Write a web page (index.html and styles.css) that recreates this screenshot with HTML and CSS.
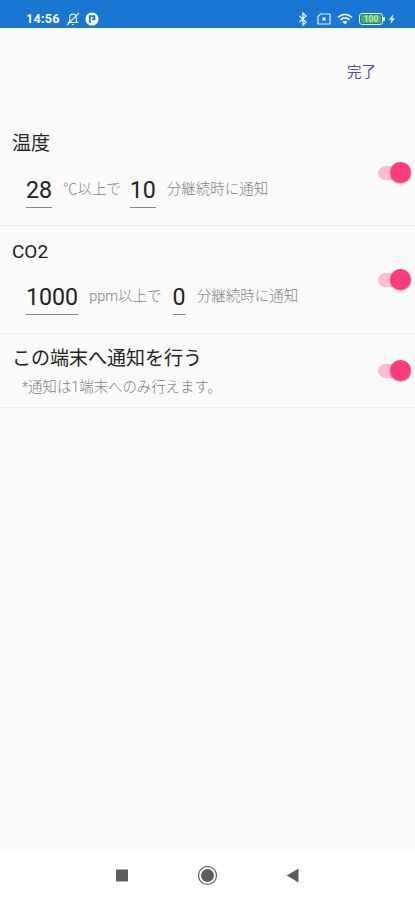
FILE: index.html
```html
<!DOCTYPE html>
<html lang="ja">
<head>
<meta charset="utf-8">
<meta name="viewport" content="width=device-width">
<title>通知設定</title>
<link rel="stylesheet" href="styles.css">
</head>
<body>
<header class="status">
  <span class="clock">14:56</span>
  <svg class="bell" width="14" height="14" viewBox="0 0 14 14" fill="none" stroke="currentColor" stroke-width="1.2"><path d="M2.5 10.5h9L10.3 9V5.5a3.3 3.3 0 0 0-6.6 0V9zM6 12.5h2M1 13L13 1"/></svg>
  <svg class="app" width="14" height="14" viewBox="0 0 14 14"><circle cx="7" cy="7" r="6.6" fill="#fff"/><path d="M4.800 11V4.200h4.600v3H7" fill="none" stroke="#1976d2" stroke-width="1.8"/></svg>
  <span class="spacer"></span>
  <svg class="bluetooth" width="10" height="14" viewBox="0 0 10 14" fill="none" stroke="currentColor" stroke-width="1.4"><path d="M1.500 4L8 10 5 13V1l3 3-6.500 6"/></svg>
  <svg class="sim" width="14" height="12" viewBox="0 0 14 12" fill="none" stroke="currentColor" stroke-width="1.2"><path d="M3.500 1H13v10H1V3.500z"/><path d="M5.500 4.500l3 3M8.500 4.500l-3 3" stroke-width="1.500"/></svg>
  <svg class="wifi" width="16" height="12" viewBox="0 0 16 12" fill="none" stroke="currentColor" stroke-width="1.7"><path d="M1 4.300q7-6 14 0M3.300 6.900q4.700-4 9.400 0"/><path d="M5.300 8.700q2.700-2 5.400 0L8 11.600z" fill="currentColor" stroke="none"/></svg>
  <span class="battery"><span class="level">100</span></span>
  <svg class="bolt" width="8" height="12" viewBox="0 0 8 12"><path d="M5.500 1L.8 6.800h2.700L2.300 11 7.200 5.200H4.500z" fill="currentColor"/></svg>
</header>
<div class="toolbar"><a class="done">完了</a></div>
<main>
  <section class="row">
    <div class="body">
      <h2>温度</h2>
      <div class="rule"><span class="value">28</span><span class="unit celsius">℃以上で</span><span class="value">10</span><span class="unit">分継続時に通知</span></div>
    </div>
    <span class="switch"></span>
  </section>
  <section class="row co2">
    <div class="body">
      <h2>CO2</h2>
      <div class="rule"><span class="value">1000</span><span class="unit">ppm以上で</span><span class="value">0</span><span class="unit">分継続時に通知</span></div>
    </div>
    <span class="switch"></span>
  </section>
  <section class="row short">
    <div class="body">
      <h2>この端末へ通知を行う</h2>
      <p class="note">*通知は1端末へのみ行えます。</p>
    </div>
    <span class="switch"></span>
  </section>
</main>
<nav>
  <svg width="20" height="20" viewBox="0 0 20 20"><rect x="4" y="3.500" width="12" height="12" rx=".5" fill="#5c5c5c"/></svg>
  <svg width="20" height="20" viewBox="0 0 20 20"><circle cx="9.500" cy="9.500" r="9" fill="none" stroke="#5c5c5c" stroke-width="1.200"/><circle cx="9.500" cy="9.500" r="6.500" fill="#5c5c5c"/></svg>
  <svg width="20" height="20" viewBox="0 0 20 20"><path d="M2.700 9.500L14.500 2.500v14z" fill="#5c5c5c"/></svg>
</nav>
</body>
</html>
```
FILE: styles.css
```css
* { box-sizing: border-box; }
body {
  margin: 0;
  height: 900px;
  display: flex;
  flex-direction: column;
  background: #fafafa;
  color: #222;
  font-family: Roboto, "Noto Sans CJK JP", sans-serif;
  overflow: hidden;
}
.status {
  height: 28px;
  padding: 9px 19px 0 26px;
  display: flex;
  align-items: center;
  background: #1976d2;
  color: #e3effb;
}
.clock { font-size: 12.5px; font-weight: 700; letter-spacing: .3px; line-height: 19px; color: #fff; }
.bell { margin-left: 6px; }
.app { margin-left: 5px; }
.spacer { flex: 1; }
.sim { margin-left: 9px; }
.wifi { margin-left: 6px; }
.battery {
  position: relative;
  width: 24px;
  height: 12px;
  margin: 0 2px 0 6px;
  padding: 1px;
  border: 1px solid #e3effb;
  border-radius: 3px;
}
.battery::after {
  content: "";
  position: absolute;
  right: -3px;
  top: 3px;
  width: 2px;
  height: 4px;
  background: #e3effb;
}
.level {
  display: block;
  height: 8px;
  border-radius: 1px;
  background: #4caf50;
  color: #c5ecb0;
  font-size: 8.5px;
  font-weight: 700;
  line-height: 8px;
  text-align: center;
}
.bolt { margin-left: 3px; }
.toolbar {
  height: 90px;
  padding: 35px 39px 0 0;
  display: flex;
  justify-content: flex-end;
  align-items: flex-start;
}
.done { font-size: 14.5px; line-height: 20px; color: #5648d4; }
main { flex: 1; }
.row {
  height: 108px;
  padding: 0 4px 0 12px;
  display: flex;
  align-items: center;
  justify-content: space-between;
  border-bottom: 1px solid #eee;
}
.body { align-self: flex-start; padding-top: 12px; }
h2 { margin: 0; font-size: 19px; font-weight: 400; line-height: 28px; }
.rule {
  display: flex;
  align-items: flex-start;
  padding: 17px 0 0 14px;
}
.value {
  height: 33px;
  border-bottom: 1px solid #858585;
  font-size: 23.2px;
  line-height: 30px;
}
.unit {
  margin: 0 11px;
  padding-top: 1px;
  font-size: 14.5px;
  line-height: 28px;
  color: #808080;
  font-weight: 300;
  white-space: nowrap;
}
.celsius { margin-right: 9px; letter-spacing: -.1px; }
.co2 .rule { padding-top: 16px; }
.short { height: 74px; }
.short .body { padding-top: 11px; }
.note { margin: 3px 0 0 10px; font-size: 14.4px; line-height: 24px; color: #808080; font-weight: 300; }
.switch {
  position: relative;
  flex: none;
  width: 33px;
  height: 14px;
  margin-top: 2px;
  border-radius: 7px;
  background: linear-gradient(90deg, #fcbcd2 26px, transparent 26px);
}
.co2 .switch, .short .switch { margin-top: 0; }
.switch::after {
  content: "";
  position: absolute;
  right: 0;
  top: -4px;
  width: 21px;
  height: 21px;
  border-radius: 50%;
  background: #fc3c7c;
  box-shadow: 0 1px 2px rgba(0, 0, 0, .3);
}
nav {
  height: 49px;
  display: flex;
  justify-content: center;
  align-items: center;
  gap: 66px;
  background: #fff;
}
```
